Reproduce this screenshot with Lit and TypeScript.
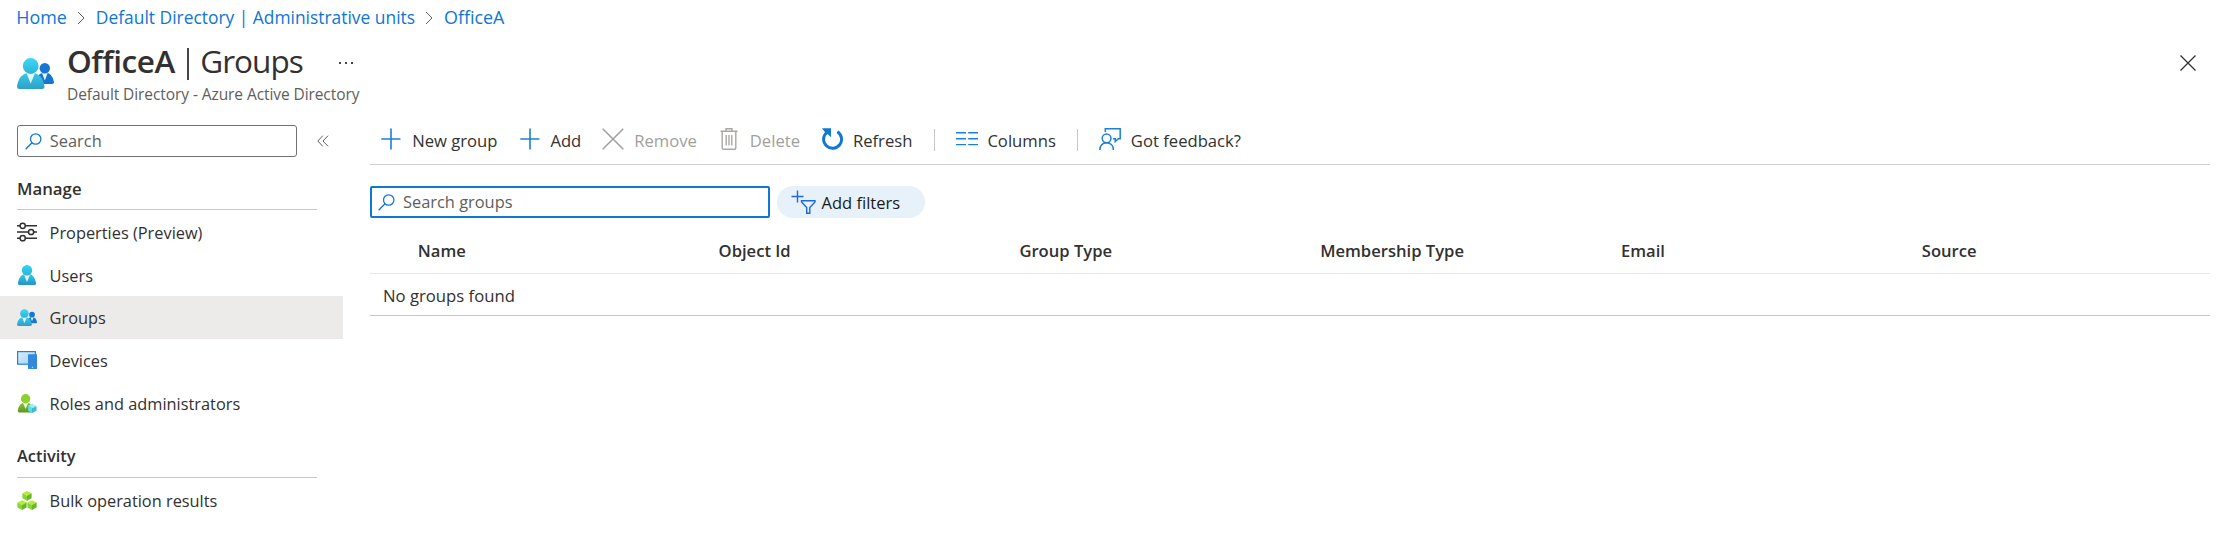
import { LitElement, html, svg, css } from "lit";
import { customElement, property } from "lit/decorators.js";
import { classMap } from "lit/directives/class-map.js";

const chevron = html`<svg class="chevron" width="8" height="14" viewBox="0 0 8 14" fill="none" stroke="#605e5c" stroke-width="1"><path d="M1 1 L7 7 L1 13"/></svg>`;

const magnifier = html`<svg width="17" height="17" viewBox="0 0 17 17" fill="none" stroke="#0f76d3" stroke-width="1.3"><circle cx="10.7" cy="6" r="5.2"/><path d="M7 9.7 L0.6 16.2"/></svg>`;

const icons: Record<string, unknown> = {
  sliders: html`<svg width="20" height="20" viewBox="0 0 20 20" fill="none" stroke="#323130" stroke-width="1.5">
    <path d="M0 3.8H3M8.4 3.8H20M0 10H11.4M16.8 10H20M0 16.2H3M8.4 16.2H20"/>
    <circle cx="5.7" cy="3.8" r="2.6"/><circle cx="14.1" cy="10" r="2.6"/><circle cx="5.7" cy="16.2" r="2.6"/></svg>`,
  user: html`<svg width="20" height="20" viewBox="0 0 20 20">
    <defs><linearGradient id="u1" x1="0" y1="0" x2="0" y2="1"><stop offset="0" stop-color="#32c9ec"/><stop offset="1" stop-color="#2596c0"/></linearGradient>
    <linearGradient id="u2" x1="0" y1="0" x2="0" y2="1"><stop offset="0" stop-color="#32d4f5"/><stop offset="1" stop-color="#2fb3d6"/></linearGradient></defs>
    <path fill="url(#u1)" d="M2.800 20A1.800 1.800 0 0 1 1 17.900C1.700 12.600 4.800 8.800 10 8.800S18.300 12.600 19 17.900A1.800 1.800 0 0 1 17.200 20Z"/>
    <path fill="#e8f6fb" d="M7 9.600 L10 17 L13 9.600Z"/><circle cx="10" cy="5.200" r="5.200" fill="url(#u2)"/></svg>`,
  group: html`<svg width="20" height="17" viewBox="0 0 37 31">
    <defs><linearGradient id="g1" x1="0" y1="0" x2="0" y2="1"><stop offset="0" stop-color="#36cdee"/><stop offset="1" stop-color="#2f9fc7"/></linearGradient>
    <linearGradient id="g2" x1="0" y1="0" x2="0" y2="1"><stop offset="0" stop-color="#3bd8f8"/><stop offset="1" stop-color="#2fb3d6"/></linearGradient></defs>
    <path fill="#1577d2" d="M19 26C19 18 23 14.500 28 14.500S36 18.500 37 24.200Q37 26 35 26Z"/>
    <path fill="#eef4fb" d="M24.800 14.500 L27.800 22.500 L30.800 14.500Z"/><circle cx="27.800" cy="10.200" r="5.200" fill="#1577d2"/>
    <path fill="url(#g1)" d="M2.500 31Q0 31 0 28.500C1 20 6 14.500 13.700 14.500S26.500 20 27.500 28.500Q27.500 31 25 31Z"/>
    <path fill="#e8f6fb" d="M9.400 15 L13.700 25.500 L18 15Z"/><circle cx="13.700" cy="8" r="7.900" fill="url(#g2)"/></svg>`,
  devices: html`<svg width="20" height="18" viewBox="0 0 20 18">
    <defs><linearGradient id="d1" x1="0" y1="0" x2="1" y2="1"><stop offset="0" stop-color="#d5eefb"/><stop offset="1" stop-color="#a4d2f5"/></linearGradient></defs>
    <rect x="0.600" y="0.600" width="17.800" height="12.600" fill="url(#d1)" stroke="#2482d8" stroke-width="1.200"/>
    <rect x="11" y="3.200" width="9" height="14.800" rx="0.400" fill="#3489dd"/><circle cx="15.500" cy="16.300" r="0.700" fill="#b8dcf8"/></svg>`,
  admin: html`<svg width="20" height="19" viewBox="0 0 20 19">
    <defs><linearGradient id="a1" x1="0" y1="0" x2="0" y2="1"><stop offset="0" stop-color="#86c92b"/><stop offset="1" stop-color="#60941f"/></linearGradient></defs>
    <path fill="url(#a1)" d="M2.300 18.500Q.700 18.500 .800 16.800C1.400 12 4 8.500 8.600 8.500S15.800 12 16.400 16.800Q16.500 18.500 14.900 18.500Z"/>
    <path fill="#f0f7e4" d="M6 8.900 L8.600 15 L11.200 8.900Z"/><circle cx="8.600" cy="4.800" r="4.700" fill="#8fd02f"/>
    <path fill="#9cebff" d="M15.300 9.800 L19.500 12 L15.300 14.200 L11.100 12Z"/><path fill="#50e0fb" d="M11.100 12 L15.300 14.200 V19 L11.100 16.800Z"/><path fill="#32bedd" d="M19.500 12 L15.300 14.200 V19 L19.500 16.800Z"/></svg>`,
  cubes: html`<svg width="20" height="19" viewBox="0 0 20 19">
    ${[[5, 0], [0, 9.3], [10, 9.3]].map(([x, y]) => svg`<g transform="translate(${x} ${y})">
      <path fill="#b4ec36" d="M5 0 L9.600 2.300 L5 4.700 L.400 2.300Z"/><path fill="#86d633" d="M.400 2.300 L5 4.700 V9.700 L.400 7.300Z"/><path fill="#6bb42c" d="M9.600 2.300 L5 4.700 V9.700 L9.600 7.300Z"/></g>`)}</svg>`,
  plus: html`<svg width="22" height="22" viewBox="0 0 22 22" fill="none" stroke="#1b80d6" stroke-width="1.600"><path d="M11 .500V21.500M1.300 11H20.500"/></svg>`,
  remove: html`<svg width="22" height="22" viewBox="0 0 22 22" fill="none" stroke="#a19f9d" stroke-width="1.500"><path d="M.700 .700L21.300 21.300M21.300 .700L.700 21.300"/></svg>`,
  trash: html`<svg width="22" height="22" viewBox="0 0 22 22" fill="none" stroke="#a9a7a5" stroke-width="1.400"><path d="M2.500 3.300H19.500M8 3V.800H14V3M4.200 3.500V20Q4.200 21.300 5.500 21.300H16.500Q17.800 21.300 17.800 20V3.500M8.200 7V17.500M11 7V17.500M13.800 7V17.500"/></svg>`,
  refresh: html`<svg width="22" height="22" viewBox="0 0 22 22"><path fill="none" stroke="#0f78d4" stroke-width="2.900" d="M16.400 3.700A9 9 0 1 1 5.400 4.700"/><path fill="#0f78d4" d="M1 .300H10V9.300L7 6.300 L5 6.500 L3.500 3.500Z"/></svg>`,
  columns: html`<svg width="22" height="22" viewBox="0 0 22 22" stroke="#1b80d6" stroke-width="1.400"><path d="M0 4.700H10M12.200 4.700H22M0 10.700H10M12.200 10.700H22M0 16.600H10M12.200 16.600H22"/></svg>`,
  feedback: html`<svg width="22" height="22" viewBox="0 0 22 22" fill="none" stroke="#1b80d6" stroke-width="1.500"><circle cx="7.600" cy="10.300" r="4.400"/><path d="M.800 22C.800 17.500 3.500 14.700 7.600 14.700S14.400 17.500 14.400 22"/><path d="M6.300 4V.800H21.200V10.800H19.400L16.200 13.600V10.800H14"/></svg>`,
};

@customElement("nav-item")
class NavItem extends LitElement {
  @property() icon = "";
  @property() label = "";
  @property({ type: Boolean }) active = false;
  static styles = css`
    :host { display: block; height: 42.7px; }
    .row { box-sizing: border-box; height: 100%; display: flex; align-items: center; gap: 12.6px; padding-left: 17px; }
    .active { background: #edebe9; }
    .icon { width: 20px; display: flex; }
    .label { padding-top: 1px; white-space: nowrap; font-size: 16.35px; }
  `;
  render() {
    return html`<div class=${classMap({ row: true, active: this.active })}><span class="icon">${icons[this.icon]}</span><span class="label">${this.label}</span></div>`;
  }
}

@customElement("tool-button")
class ToolButton extends LitElement {
  @property() icon = "";
  @property() label = "";
  @property({ type: Boolean }) disabled = false;
  static styles = css`
    :host { display: flex; align-items: center; gap: 9.8px; white-space: nowrap; }
    svg { display: block; }
    .disabled { color: #a19f9d; }
    .label { padding-top: 2.4px; }
  `;
  render() {
    return html`${icons[this.icon]}<span class=${classMap({ label: true, disabled: this.disabled })}>${this.label}</span>`;
  }
}

@customElement("app-root")
class AppRoot extends LitElement {
  static styles = css`
    :host { display: block; height: 548px; overflow: hidden; background: #fff; color: #323130; font: 16.4px/22px "Open Sans", "Noto Sans", sans-serif; }
    svg { display: block; flex: none; }
    .crumbs { box-sizing: border-box; height: 36px; display: flex; align-items: center; padding: 0 0 2px 16.3px; font-size: 17.4px; color: #0f76d3; white-space: nowrap; }
    .short { font-size: 17.9px; }
    .chevron { margin: 2px 11px 0 10px; }
    .header { height: 76px; display: flex; padding-left: 17px; }
    .logo { padding-top: 22px; }
    .logo svg { width: 37px; height: 31px; }
    .titles { padding-left: 13px; white-space: nowrap; }
    .title { display: flex; align-items: center; height: 50px; font-size: 31.5px; line-height: 50px; }
    .name { font-weight: 600; letter-spacing: -0.45px; }
    .bar { width: 2px; height: 32px; margin: 5px 11.5px 0 12px; background: #484644; }
    .page { letter-spacing: -1px; }
    .dots { display: flex; gap: 4px; margin: 3px 0 0 36px; }
    .dots i { width: 2px; height: 2px; background: #484644; }
    .subtitle { margin-top: -3px; font-size: 15.5px; line-height: 22px; letter-spacing: -0.08px; color: #605e5c; }
    .close { margin: 18.5px 22px 0 auto; }
    .body { display: grid; grid-template-columns: 343px 1fr; column-gap: 27px; }
    .side { padding-top: 13px; }
    .find { display: flex; align-items: center; }
    .box { box-sizing: border-box; display: flex; align-items: center; height: 32px; color: #605e5c; }
    .side .box { width: 280px; margin-left: 17px; padding-left: 7px; gap: 7.8px; border: 1px solid #737170; border-radius: 3px; }
    .collapse { margin-left: 20px; }
    .heading { display: flex; align-items: flex-end; box-sizing: border-box; margin-left: 17px; width: 300px; border-bottom: 1px solid #c8c6c4; font-weight: 600; font-size: 16.8px; }
    .manage { height: 53px; padding-bottom: 9px; margin-bottom: 1px; }
    .activity { height: 53.5px; padding-bottom: 9.5px; margin-bottom: 1px; font-size: 16.4px; }
    .tools { box-sizing: border-box; height: 53px; display: flex; align-items: center; gap: 21.1px; padding: 3px 0 0 10.4px; border-bottom: 1px solid #d2d0ce; font-size: 16.65px; }
    .sep { width: 1px; height: 22px; background: #c8c6c4; }
    .main { padding-right: 8px; }
    .filters { display: flex; gap: 7px; padding-top: 21px; }
    .filters .box { width: 400px; padding-left: 6px; gap: 8px; border: 2px solid #0f78d4; border-radius: 2px; }
    .pill { box-sizing: border-box; display: flex; align-items: center; width: 148px; height: 32px; padding-left: 13.5px; gap: 6px; border-radius: 16px; background: #e6f1fa; color: #1b1a19; font-size: 16.5px; }
    .pill span { padding-top: 2px; }
    .table { display: grid; grid-template-rows: 56px 42px; }
    .head { display: grid; grid-template-columns: repeat(5, 300.8px) 1fr; align-items: center; padding-left: 47.8px; border-bottom: 1px solid #e9e8e6; font-weight: 600; font-size: 16.6px; }
    .head span { padding-top: 11px; }
    .empty { display: flex; align-items: center; padding: 2px 0 0 13px; border-bottom: 1px solid #c8c6c4; font-size: 16.7px; }
  `;
  render() {
    return html`
      <nav class="crumbs"><span class="short">Home</span>${chevron}<span>Default Directory | Administrative units</span>${chevron}<span class="short">OfficeA</span></nav>
      <header class="header">
        <div class="logo">${icons.group}</div>
        <div class="titles">
          <div class="title"><span class="name">OfficeA</span><span class="bar"></span><span class="page">Groups</span><span class="dots"><i></i><i></i><i></i></span></div>
          <div class="subtitle">Default Directory - Azure Active Directory</div>
        </div>
        <svg class="close" width="16" height="16" viewBox="0 0 16 16" stroke="#323130" stroke-width="1.300"><path d="M.500 .500L15.500 15.500M15.500 .500L.500 15.500"/></svg>
      </header>
      <div class="body">
        <aside class="side">
          <div class="find">
            <div class="box">${magnifier}<span>Search</span></div>
            <svg class="collapse" width="12" height="12" viewBox="0 0 12 12" fill="none" stroke="#605e5c" stroke-width="1"><path d="M5.800 .700L.800 6L5.800 11.300M11 .700L6 6L11 11.300"/></svg>
          </div>
          <div class="heading manage">Manage</div>
          <nav-item icon="sliders" label="Properties (Preview)"></nav-item>
          <nav-item icon="user" label="Users"></nav-item>
          <nav-item icon="group" label="Groups" active></nav-item>
          <nav-item icon="devices" label="Devices"></nav-item>
          <nav-item icon="admin" label="Roles and administrators"></nav-item>
          <div class="heading activity">Activity</div>
          <nav-item icon="cubes" label="Bulk operation results"></nav-item>
        </aside>
        <main class="main">
          <div class="tools">
            <tool-button icon="plus" label="New group"></tool-button>
            <tool-button icon="plus" label="Add"></tool-button>
            <tool-button icon="remove" label="Remove" disabled></tool-button>
            <tool-button icon="trash" label="Delete" disabled></tool-button>
            <tool-button icon="refresh" label="Refresh"></tool-button>
            <span class="sep"></span>
            <tool-button icon="columns" label="Columns"></tool-button>
            <span class="sep"></span>
            <tool-button icon="feedback" label="Got feedback?"></tool-button>
          </div>
          <div class="filters">
            <div class="box">${magnifier}<span>Search groups</span></div>
            <div class="pill">
              <svg width="25" height="25" viewBox="0 0 25 25" fill="none" stroke="#2169db" stroke-width="1.400"><path d="M6.500 .500V12.500M.500 6.500H12.500"/><path d="M10.500 10.700H24V12L18.800 17.500V23.300H15.700V17.500L10.500 12Z"/></svg>
              <span>Add filters</span>
            </div>
          </div>
          <div class="table">
            <div class="head">${["Name", "Object Id", "Group Type", "Membership Type", "Email", "Source"].map((c) => html`<span>${c}</span>`)}</div>
            <div class="empty">No groups found</div>
          </div>
        </main>
      </div>`;
  }
}
